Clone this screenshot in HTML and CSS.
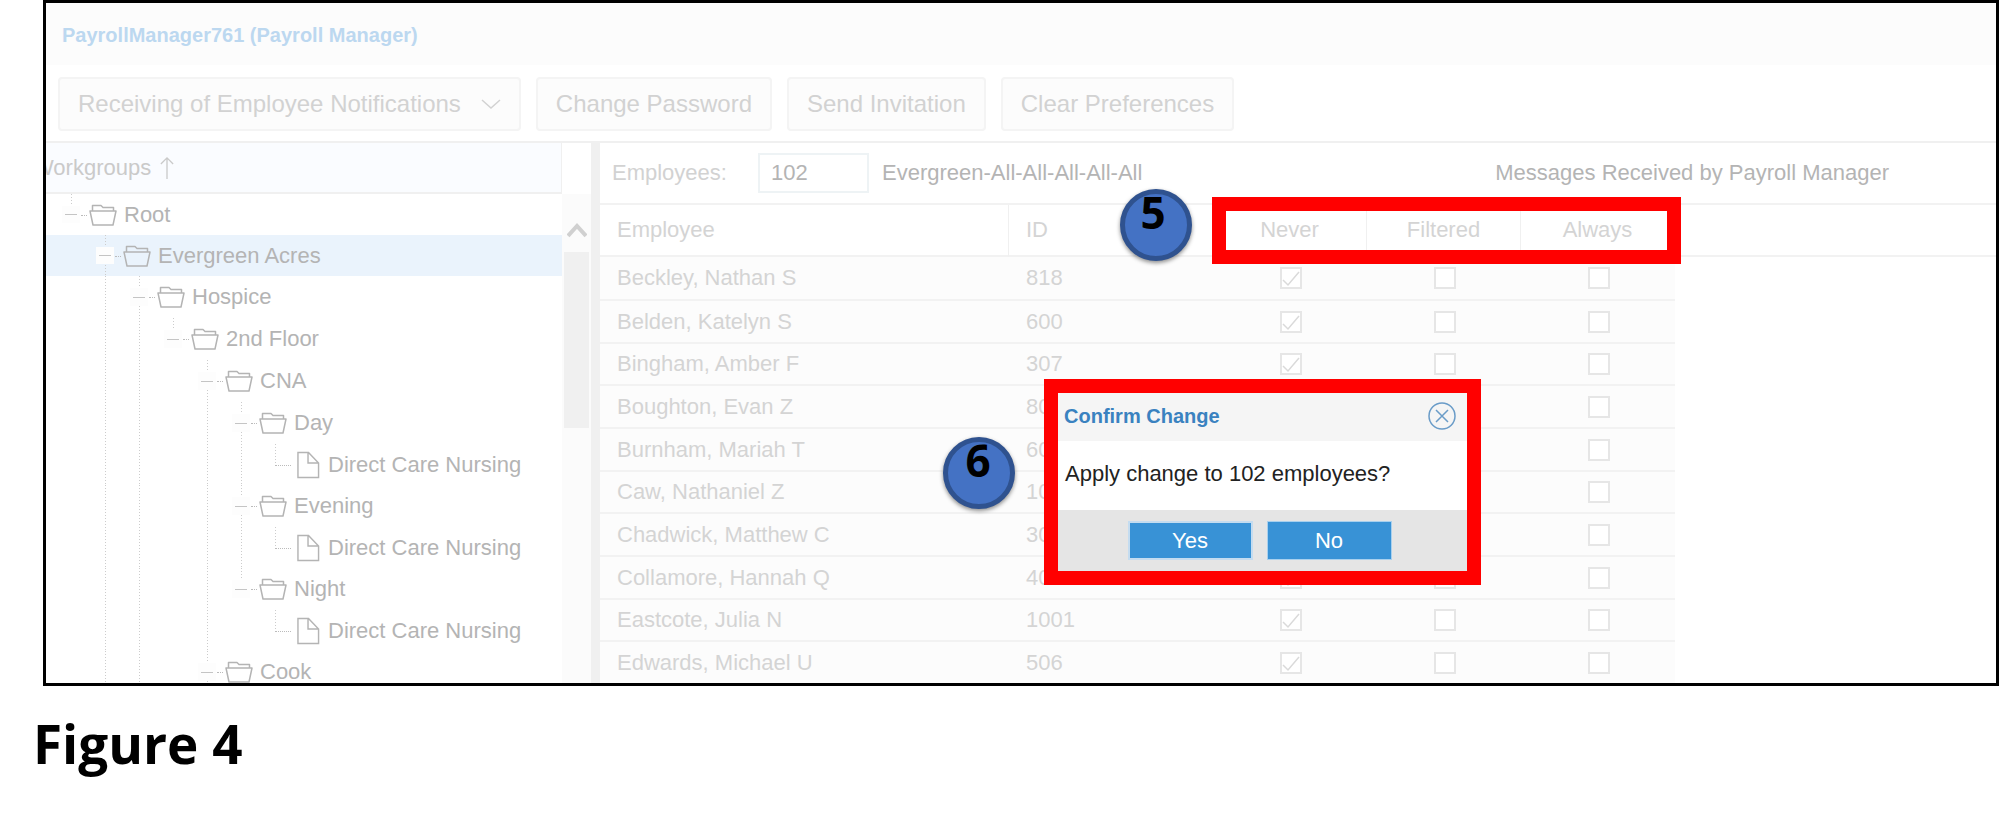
FILE: index.html
```html
<!DOCTYPE html>
<html lang="en">
<head>
<meta charset="utf-8">
<title>Payroll Manager</title>
<link rel="stylesheet" href="styles.css">
</head>
<body>
<svg class="defs" aria-hidden="true">
  <symbol id="folder" viewBox="0 0 28 22"><path d="M3.500 7V1.500h8.500l2 2h10.500V7M1 7h26l-3 14H4z" fill="none" stroke="currentColor" stroke-width="1.500" stroke-linejoin="round"/></symbol>
  <symbol id="file" viewBox="0 0 24 28"><path d="M1 1h11l10.500 11v15H1zM11.500 1v11h11" fill="none" stroke="currentColor" stroke-width="1.500"/></symbol>
</svg>
<figure class="figure">
  <div class="frame">
    <header class="titlebar"><h1>PayrollManager761 (Payroll Manager)</h1></header>
    <div class="toolbar">
      <button type="button">Receiving of Employee Notifications
        <svg class="chevron" viewBox="0 0 20 10" aria-hidden="true"><path d="M1 1l9 8 9-8" fill="none" stroke="currentColor" stroke-width="1.500"/></svg></button>
      <button type="button">Change Password</button>
      <button type="button">Send Invitation</button>
      <button type="button">Clear Preferences</button>
    </div>
    <div class="panes">
      <nav class="groups">
        <div class="groups-head"><span class="groups-title">Workgroups</span>
          <svg class="sort" viewBox="0 0 16 26" aria-hidden="true"><path d="M8 26V2M1 9l7-7 7 7" fill="none" stroke="currentColor" stroke-width="1.500"/></svg></div>
        <div class="groups-body">
          <ul class="tree">
            <li class="root"><i class="knob"></i><svg class="folder"><use href="#folder"/></svg>Root</li>
            <li class="root selected"><i></i><i class="knob more"></i><svg class="folder"><use href="#folder"/></svg>Evergreen Acres</li>
            <li><i></i><i class="line"></i><i class="knob more"></i><svg class="folder"><use href="#folder"/></svg>Hospice</li>
            <li><i></i><i class="line"></i><i class="line"></i><i class="knob"></i><svg class="folder"><use href="#folder"/></svg>2nd Floor</li>
            <li><i></i><i class="line"></i><i class="line"></i><i></i><i class="knob more"></i><svg class="folder"><use href="#folder"/></svg>CNA</li>
            <li><i></i><i class="line"></i><i class="line"></i><i></i><i class="line"></i><i class="knob more"></i><svg class="folder"><use href="#folder"/></svg>Day</li>
            <li class="leaf"><i></i><i class="line"></i><i class="line"></i><i></i><i class="line"></i><i class="line"></i><i class="elbow"></i><svg class="file"><use href="#file"/></svg>Direct Care Nursing</li>
            <li><i></i><i class="line"></i><i class="line"></i><i></i><i class="line"></i><i class="knob more"></i><svg class="folder"><use href="#folder"/></svg>Evening</li>
            <li class="leaf"><i></i><i class="line"></i><i class="line"></i><i></i><i class="line"></i><i class="line"></i><i class="elbow"></i><svg class="file"><use href="#file"/></svg>Direct Care Nursing</li>
            <li><i></i><i class="line"></i><i class="line"></i><i></i><i class="line"></i><i class="knob"></i><svg class="folder"><use href="#folder"/></svg>Night</li>
            <li class="leaf"><i></i><i class="line"></i><i class="line"></i><i></i><i class="line"></i><i></i><i class="elbow"></i><svg class="file"><use href="#file"/></svg>Direct Care Nursing</li>
            <li><i></i><i class="line"></i><i class="line"></i><i></i><i class="knob more"></i><svg class="folder"><use href="#folder"/></svg>Cook</li>
          </ul>
          <div class="scrollbar">
            <svg class="up" viewBox="0 0 20 16" aria-hidden="true"><path d="M1 14l9-10 9 10" fill="none" stroke="currentColor" stroke-width="4"/></svg>
            <div class="thumb"></div>
          </div>
        </div>
      </nav>
      <main class="detail">
        <div class="summary">
          <label for="count">Employees:</label>
          <input id="count" type="text" value="102">
          <span class="path">Evergreen-All-All-All-All-All</span>
          <span class="messages">Messages Received by Payroll Manager</span>
        </div>
        <table class="employees">
          <colgroup><col class="c-name"><col class="c-id"><col class="c-opt"><col class="c-opt"><col class="c-opt"><col></colgroup>
          <thead><tr><th>Employee</th><th>ID</th><th>Never</th><th>Filtered</th><th>Always</th><th></th></tr></thead>
          <tbody>
            <tr><td>Beckley, Nathan S</td><td>818</td><td><input type="checkbox" aria-label="Never" checked></td><td><input type="checkbox" aria-label="Filtered"></td><td><input type="checkbox" aria-label="Always"></td><td></td></tr>
            <tr><td>Belden, Katelyn S</td><td>600</td><td><input type="checkbox" aria-label="Never" checked></td><td><input type="checkbox" aria-label="Filtered"></td><td><input type="checkbox" aria-label="Always"></td><td></td></tr>
            <tr><td>Bingham, Amber F</td><td>307</td><td><input type="checkbox" aria-label="Never" checked></td><td><input type="checkbox" aria-label="Filtered"></td><td><input type="checkbox" aria-label="Always"></td><td></td></tr>
            <tr><td>Boughton, Evan Z</td><td>80</td><td><input type="checkbox" aria-label="Never" checked></td><td><input type="checkbox" aria-label="Filtered"></td><td><input type="checkbox" aria-label="Always"></td><td></td></tr>
            <tr><td>Burnham, Mariah T</td><td>60</td><td><input type="checkbox" aria-label="Never" checked></td><td><input type="checkbox" aria-label="Filtered"></td><td><input type="checkbox" aria-label="Always"></td><td></td></tr>
            <tr><td>Caw, Nathaniel Z</td><td>10</td><td><input type="checkbox" aria-label="Never" checked></td><td><input type="checkbox" aria-label="Filtered"></td><td><input type="checkbox" aria-label="Always"></td><td></td></tr>
            <tr><td>Chadwick, Matthew C</td><td>30</td><td><input type="checkbox" aria-label="Never" checked></td><td><input type="checkbox" aria-label="Filtered"></td><td><input type="checkbox" aria-label="Always"></td><td></td></tr>
            <tr><td>Collamore, Hannah Q</td><td>400</td><td><input type="checkbox" aria-label="Never" checked></td><td><input type="checkbox" aria-label="Filtered"></td><td><input type="checkbox" aria-label="Always"></td><td></td></tr>
            <tr><td>Eastcote, Julia N</td><td>1001</td><td><input type="checkbox" aria-label="Never" checked></td><td><input type="checkbox" aria-label="Filtered"></td><td><input type="checkbox" aria-label="Always"></td><td></td></tr>
            <tr><td>Edwards, Michael U</td><td>506</td><td><input type="checkbox" aria-label="Never" checked></td><td><input type="checkbox" aria-label="Filtered"></td><td><input type="checkbox" aria-label="Always"></td><td></td></tr>
          </tbody>
        </table>
        <div class="highlight"></div>
        <div class="callout five">5</div>
        <div class="callout six">6</div>
        <section class="dialog" role="dialog" aria-labelledby="dialog-title">
          <div class="dialog-head"><h2 id="dialog-title">Confirm Change</h2>
            <button class="close" type="button" aria-label="Close"><svg viewBox="0 0 28 28"><path d="M8 8l12 12M20 8L8 20" fill="none" stroke="currentColor" stroke-width="1.500"/><circle cx="14" cy="14" r="13" fill="none" stroke="currentColor" stroke-width="1.500"/></svg></button></div>
          <p>Apply change to 102 employees?</p>
          <div class="dialog-foot"><button class="yes" type="button">Yes</button><button type="button">No</button></div>
        </section>
      </main>
    </div>
  </div>
  <figcaption>Figure 4</figcaption>
</figure>
</body>
</html>
```
FILE: styles.css
```css
* { box-sizing: border-box; }
body {
  margin: 0;
  background: #fff;
  font: 22px/26px "Liberation Sans", Arial, sans-serif;
}
button, input { font: inherit; }
.defs { position: absolute; width: 0; height: 0; }
.figure { margin: 0; padding-left: 43px; }
.frame { border: 3px solid #000; overflow: hidden; }
figcaption {
  margin: 22px 0 0 -10px;
  font: bold 53px/72px "Open Sans", sans-serif;
  color: #000;
}

/* Title and toolbar */
.titlebar { padding: 19px 16px 17px; background: #fcfcfc; }
.titlebar h1 { margin: 0; font-size: 20px; line-height: 26px; color: #bcd8f0; }
.toolbar {
  display: flex;
  gap: 15px;
  padding: 12px 12px 10px;
  border-bottom: 2px solid #f0f0f0;
}
.toolbar button {
  display: flex;
  align-items: center;
  gap: 20px;
  height: 54px;
  padding: 0 18px;
  border: 2px solid #f4f4f4;
  border-radius: 4px;
  background: #fcfcfc;
  color: #d2d2d2;
  font-size: 24px;
}
.chevron { width: 20px; height: 10px; }

.panes { display: grid; grid-template-columns: 554px minmax(0, 1fr); }

/* Workgroup tree */
.groups { display: flex; flex-direction: column; border-right: 9px solid #f0f0f0; }
.groups-head {
  display: flex;
  align-items: center;
  gap: 9px;
  height: 51px;
  margin-right: 29px;
  border-right: 1px solid #f0f0f0;
  border-bottom: 2px solid #f0f0f0;
  background: #fafcff;
  color: #cacaca;
}
.groups-title { margin-left: -13px; }
.sort { width: 14px; height: 25px; }
.groups-body { display: flex; flex: 1; contain: size; overflow: hidden; }
.tree { flex: 1; margin: 0; padding: 0; list-style: none; color: #b4b4b4; }
.tree li { display: flex; align-items: center; height: 42px; padding-left: 8px; }
.tree li.leaf, .tree li.root { height: 41px; }
.tree li.selected { background: #eaf3fc; }
.tree i { position: relative; width: 34px; height: 100%; }
.line, .knob.more {
  background: repeating-linear-gradient(#ccc 0 1px, transparent 1px 3px) 17px 0 / 1px 100% no-repeat;
}
.knob:not(.more), .elbow {
  background: repeating-linear-gradient(#ccc 0 1px, transparent 1px 3px) 17px 0 / 1px 50% no-repeat;
}
.knob::before {
  content: "";
  position: absolute;
  inset: 12px 8px;
  border: solid #fdfdfd;
  border-width: 8px 3px;
  background: linear-gradient(#c4c4c4, #c4c4c4) center / 100% 1px no-repeat #fdfdfd;
}
.knob::after, .elbow::after {
  content: "";
  position: absolute;
  top: 50%;
  right: 1px;
  width: 6px;
  border-top: 1px dotted #bbb;
}
.elbow::after { width: 16px; }
.folder { width: 28px; height: 22px; margin: 0 7px 0 1px; }
.file { width: 23px; height: 28px; margin: 0 8px 0 5px; }
.scrollbar { width: 29px; padding: 28px 2px 0; background: #fbfbfb; }
.up { display: block; width: 20px; height: 16px; margin: 0 auto 14px; color: #d0d0d0; }
.thumb { height: 176px; background: #f0f0f0; }

/* Employee list */
.detail { position: relative; }
.summary {
  display: flex;
  align-items: center;
  padding: 10px 12px;
  border-bottom: 2px solid #f2f2f2;
  color: #b4b4b4;
}
.summary label { width: 146px; color: #d2d2d2; }
.summary input {
  width: 111px;
  height: 40px;
  padding: 0 11px;
  border: 2px solid #eef3f5;
  background: #fff;
  color: #b4b4b4;
}
.path { margin-left: 13px; }
.messages { margin: 0 95px 0 auto; }
.employees {
  width: 100%;
  table-layout: fixed;
  border-collapse: separate;
  border-spacing: 0;
  color: #d4d4d4;
}
.c-name { width: 409px; }
.c-id { width: 204px; }
.c-opt { width: 154px; }
.employees th, .employees td { padding: 0 17px; text-align: left; font-weight: normal; }
.employees th { height: 52px; border-bottom: 2px solid #f2f2f2; }
.employees th:not(:last-child) { border-right: 1px solid #f0f0f0; }
.employees td { height: 43px; background: #fcfcfc; border-bottom: 2px solid #f2f2f2; }
.employees tr:nth-child(3n) td { height: 42px; }
.employees tbody tr:first-child td { height: 44px; }
.employees tbody tr:last-child td { height: 41px; border-bottom: 0; }
.employees td:last-child { background: none; border: 0; }
.employees :is(th, td):nth-child(n+3) { padding: 0; text-align: center; }
.employees td:nth-child(n+3) { padding-left: 2px; }
.employees input {
  appearance: none;
  display: block;
  width: 22px;
  height: 22px;
  margin: 0 auto;
  border: 2px solid #e6e6e6;
  background: #fff;
}
.employees input:checked {
  background: url("data:image/svg+xml,%3Csvg xmlns='http://www.w3.org/2000/svg' viewBox='0 0 18 18'%3E%3Cpath d='M1 11l5 5L17 3' fill='none' stroke='%23dadada' stroke-width='1.500'/%3E%3C/svg%3E") #fff;
}

/* Annotations */
.highlight {
  position: absolute;
  top: 54px;
  left: 612px;
  width: 469px;
  height: 67px;
  border: 14px solid #f00;
}
.callout {
  position: absolute;
  width: 72px;
  height: 72px;
  border: 5px solid #2f528f;
  border-radius: 50%;
  background: #4472c4;
  box-shadow: 0 2px 4px rgb(0 0 0 / 45%);
  color: #000;
  font: bold 44px/36px "Open Sans", sans-serif;
  text-align: center;
}
.five { top: 46px; left: 520px; padding-right: 6px; }
.six { top: 294px; left: 343px; padding-right: 2px; }

/* Confirmation dialog */
.dialog {
  position: absolute;
  top: 236px;
  left: 444px;
  width: 437px;
  border: 14px solid #f00;
  background: #fff;
  color: #222;
}
.dialog-head {
  display: flex;
  align-items: center;
  justify-content: space-between;
  height: 48px;
  padding: 0 11px 2px 6px;
  background: #f5f5f5;
  color: #3a82c0;
}
.dialog h2 { margin: 0; font-size: 20px; line-height: 26px; }
.close { width: 28px; height: 28px; padding: 0; border: 0; background: none; color: #6a9cc8; }
.close svg { display: block; }
.dialog p { margin: 0; padding: 20px 7px 23px; }
.dialog-foot {
  display: flex;
  justify-content: center;
  gap: 14px;
  padding: 11px 6px 11px 0;
  background: #e5e5e5;
}
.dialog-foot button {
  width: 125px;
  height: 39px;
  padding: 0;
  border: 1px solid #a8d0ee;
  background: #3892d6;
  color: #fff;
}
.dialog-foot .yes { border: 2px solid #c4dcf0; }
```
